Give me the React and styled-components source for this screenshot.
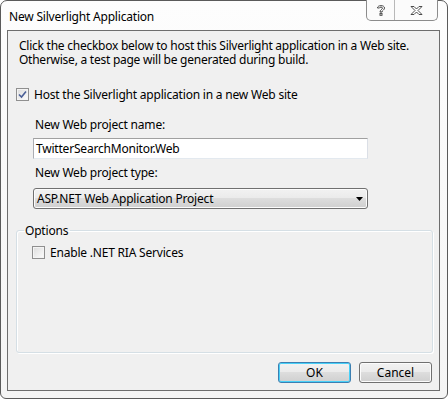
import React from "react";
import styled, { createGlobalStyle } from "styled-components";

const Global = createGlobalStyle`
  html, body {
    margin: 0;
    padding: 0;
    background: #ffffff;
  }
  body {
    font-family: "Noto Sans", "Open Sans", sans-serif;
    font-size: 12px;
    color: #000;
  }
`;

const Window = styled.div`
  width: 448px;
  height: 399px;
  box-sizing: border-box;
  border: 1px solid #5a5a5a;
  border-radius: 7px 7px 6px 6px;
  background: linear-gradient(to bottom, #fdfdfd, #f4f4f4);
  padding: 0 7px 7px 6px;
  display: flex;
  flex-direction: column;
`;

const TitleBar = styled.div`
  height: 29px;
  display: flex;
  align-items: flex-start;
  justify-content: space-between;
`;

const Title = styled.div`
  padding: 7px 0 0 2px;
  font-size: 12px;
  letter-spacing: -0.2px;
`;

const Caption = styled.div`
  display: flex;
  margin-top: -1px;
  margin-right: 2px;
  border: 1px solid #8c8c8c;
  border-top: none;
  border-radius: 0 0 5px 5px;
  background: #fbfbfb;
  height: 20px;
`;

const CapButton = styled.div`
  width: ${(p) => p.w}px;
  display: flex;
  align-items: center;
  justify-content: center;
  & + & {
    border-left: 1px solid #b8b8b8;
  }
`;

const Client = styled.div`
  flex: 1;
  border: 1px solid #6d6d6d;
  background: #f0f0f0;
  padding: 8px 6px 7px 8px;
  display: flex;
  flex-direction: column;
`;

const Intro = styled.p`
  margin: 0 0 0 3px;
  line-height: 14px;
  letter-spacing: -0.25px;
`;

const CheckRow = styled.label`
  display: flex;
  align-items: center;
  gap: 5px;
  height: 13px;
  margin: ${(p) => p.m};
  letter-spacing: -0.2px;
`;

const Box = styled.span`
  width: 11px;
  height: 11px;
  border: 1px solid #8f8f8f;
  background: linear-gradient(135deg, #dcdcdc, #fdfdfd);
  box-shadow: inset 0 0 0 1px #f4f4f4;
  display: flex;
  align-items: center;
  justify-content: center;
`;

const Indented = styled.div`
  margin-left: 17px;
  width: 335px;
  display: flex;
  flex-direction: column;
`;

const FieldLabel = styled.div`
  margin: ${(p) => p.m};
  padding-left: 2px;
  line-height: 13px;
  letter-spacing: -0.2px;
`;

const Input = styled.div`
  height: 21px;
  box-sizing: border-box;
  border: 1px solid #abadb3;
  border-top-color: #a0a0a0;
  border-right-color: #dbdfe6;
  border-bottom-color: #e3e9ef;
  background: #fff;
  padding-left: 2px;
  display: flex;
  align-items: center;
  letter-spacing: -0.2px;
`;

const Select = styled.div`
  height: 21px;
  box-sizing: border-box;
  border: 1px solid #707070;
  border-radius: 3px;
  background: linear-gradient(to bottom, #f2f2f2 0%, #ebebeb 45%, #dddddd 50%, #cfcfcf 100%);
  box-shadow: inset 0 0 0 1px #fcfcfc;
  padding: 0 4px 0 3px;
  display: flex;
  align-items: center;
  justify-content: space-between;
  letter-spacing: -0.2px;
`;

const Group = styled.fieldset`
  margin: 15px 0 0 0;
  padding: 9px 0 0 15px;
  height: 129px;
  border: 1px solid #d5dfe5;
  box-shadow: inset 1px 1px 0 #fff, 1px 1px 0 #fff;
  border-radius: 3px;
  box-sizing: border-box;
`;

const Legend = styled.legend`
  padding: 0 2px 0 1px;
  margin-left: -8px;
  line-height: 13px;
  letter-spacing: -0.2px;
`;

const Footer = styled.div`
  margin-top: auto;
  display: flex;
  justify-content: flex-end;
  gap: 8px;
  padding-right: 1px;
`;

const Button = styled.div`
  width: 73px;
  height: 21px;
  box-sizing: border-box;
  border: 1px solid ${(p) => (p.primary ? "#3c7fb1" : "#707070")};
  border-radius: 3px;
  background: linear-gradient(to bottom, #f2f2f2 0%, #ebebeb 45%, #dddddd 50%, #cfcfcf 100%);
  box-shadow: inset 0 0 0 1px ${(p) => (p.primary ? "#48d0f8" : "#fcfcfc")};
  display: flex;
  align-items: center;
  justify-content: center;
`;

const Check = ({ checked }) => (
  <Box>
    {checked && (
      <svg width="9" height="9" viewBox="0 0 9 9">
        <path d="M1 4.5 L3.5 7 L8 1.5" stroke="#4a5f97" strokeWidth="1.6" fill="none" />
      </svg>
    )}
  </Box>
);

export default function App() {
  return (
    <>
      <Global />
      <Window>
        <TitleBar>
          <Title>New Silverlight Application</Title>
          <Caption>
            <CapButton w={27}>
              <svg width="10" height="13" viewBox="0 0 10 13">
                <path
                  d="M1.5 4 C1.5 0.8 8.5 0.8 8.5 4 C8.5 6 6 6.3 6 8 H4 C4 5.8 6.5 5.5 6.5 4 C6.5 2.8 3.5 2.8 3.5 4 Z"
                  stroke="#3a3a3a"
                  strokeWidth="0.9"
                  fill="#fff"
                />
                <rect x="4" y="9.3" width="2" height="2" stroke="#3a3a3a" strokeWidth="0.9" fill="#fff" />
              </svg>
            </CapButton>
            <CapButton w={42}>
              <svg width="13" height="9" viewBox="0 0 13 9">
                <path
                  d="M1 0.5 H4 L6.5 3 L9 0.5 H12 L8 4.5 L12 8.5 H9 L6.5 6 L4 8.5 H1 L5 4.5 Z"
                  stroke="#3a3a3a"
                  strokeWidth="0.9"
                  fill="#fff"
                />
              </svg>
            </CapButton>
          </Caption>
        </TitleBar>
        <Client>
          <Intro>
            Click the checkbox below to host this Silverlight application in a Web site.
            <br />
            Otherwise, a test page will be generated during build.
          </Intro>
          <CheckRow m="21px 0 0 0">
            <Check checked />
            Host the Silverlight application in a new Web site
          </CheckRow>
          <Indented>
            <FieldLabel m="17px 0 7px 0">New Web project name:</FieldLabel>
            <Input>TwitterSearchMonitor.Web</Input>
            <FieldLabel m="7px 0 9px 0">New Web project type:</FieldLabel>
            <Select>
              ASP.NET Web Application Project
              <svg width="7" height="4" viewBox="0 0 7 4">
                <path d="M0 0 H7 L3.5 4 Z" fill="#000" />
              </svg>
            </Select>
          </Indented>
          <Group>
            <Legend>Options</Legend>
            <CheckRow m="0">
              <Check />
              Enable .NET RIA Services
            </CheckRow>
          </Group>
          <Footer>
            <Button primary>OK</Button>
            <Button>Cancel</Button>
          </Footer>
        </Client>
      </Window>
    </>
  );
}
